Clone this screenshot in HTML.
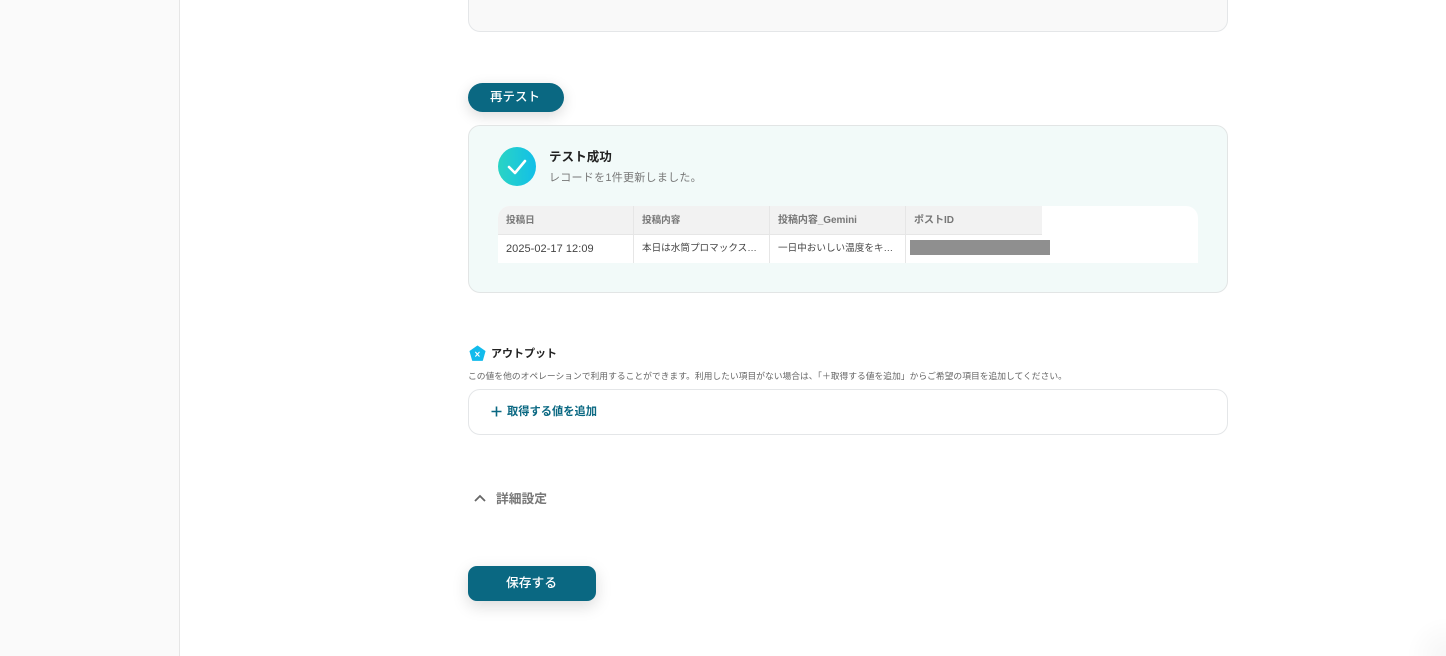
<!DOCTYPE html>
<html lang="ja"><head><meta charset="utf-8"><style>
*{box-sizing:border-box}
html,body{margin:0;padding:0;width:1446px;height:656px;overflow:hidden;background:#fff;font-family:"Liberation Sans","Noto Sans CJK JP",sans-serif;color:#222}
.a{position:absolute}
.t{position:absolute;white-space:nowrap;line-height:1}
.cell{position:absolute;top:0;height:57px;border-right:1px solid #e6e6e6}
</style></head><body>
<div class="a" style="left:0;top:0;width:180px;height:656px;background:#fafafa;border-right:1px solid #e6e6e6"></div>
<div class="a" style="left:468px;top:-40px;width:760px;height:72px;background:#f9f9f9;border:1px solid #e4e6e8;border-radius:12px"></div>

<div class="a" style="left:468px;top:83px;width:96px;height:29px;background:#0a6882;border-radius:15px;box-shadow:0 4px 14px rgba(0,0,0,.15)"></div>
<div class="t" style="left:490px;top:91px;font-size:12.5px;font-weight:500;color:#fff">再テスト</div>

<div class="a" style="left:468px;top:125px;width:760px;height:168px;background:#f2faf9;border:1px solid #e2e5e5;border-radius:12px"></div>
<div class="a" style="left:498px;top:147px;width:38px;height:39px;border-radius:50%;background:linear-gradient(90deg,#2ad4c4,#12bfe8)"></div>
<svg class="a" style="left:498px;top:147px" width="38" height="39" viewBox="0 0 38 39"><path d="M11 20l6 6 10-12" fill="none" stroke="#fff" stroke-width="2.6" stroke-linecap="round" stroke-linejoin="round"/></svg>
<div class="t" style="left:549px;top:151px;font-size:12.5px;font-weight:700;color:#222;letter-spacing:.1px">テスト成功</div>
<div class="t" style="left:549px;top:173px;font-size:11px;color:#777;letter-spacing:.27px">レコードを1件更新しました。</div>

<div class="a" style="left:498px;top:206px;width:700px;height:57px;background:#fff;border-radius:12px 12px 0 0;overflow:hidden">
  <div class="a" style="left:0;top:0;width:544px;height:28px;background:#f2f2f2"></div>
  <div class="a" style="left:0;top:28px;width:544px;height:1px;background:#e6e6e6"></div>
  <div class="cell" style="left:0;width:136px"></div>
  <div class="cell" style="left:136px;width:136px"></div>
  <div class="cell" style="left:272px;width:136px"></div>
  <div class="t" style="left:8px;top:10px;font-size:9.6px;font-weight:700;color:#777">投稿日</div>
  <div class="t" style="left:144px;top:10px;font-size:9.6px;font-weight:700;color:#777">投稿内容</div>
  <div class="t" style="left:280px;top:10px;font-size:10px;font-weight:700;color:#777;letter-spacing:-.05px">投稿内容_Gemini</div>
  <div class="t" style="left:416px;top:10px;font-size:10px;font-weight:700;color:#777">ポストID</div>
  <div class="t" style="left:8px;top:38px;font-size:11px;color:#444;letter-spacing:.05px">2025-02-17 12:09</div>
  <div class="t" style="left:144px;top:38px;font-size:9.6px;color:#444">本日は水筒プロマックス…</div>
  <div class="t" style="left:280px;top:38px;font-size:9.6px;color:#444">一日中おいしい温度をキ…</div>
</div>
<div class="a" style="left:910px;top:240px;width:140px;height:15px;background:#8f8f8f"></div>

<svg class="a" style="left:469px;top:345px" width="17" height="17" viewBox="0 0 17 17"><path d="M8.5 1L16 6.3 13.4 15.4H3.6L1 6.3Z" fill="#12bbec" stroke="#12bbec" stroke-width="1" stroke-linejoin="round"/><path d="M6.6 7.2l3.6 4M10.2 7.2l-3.6 4" stroke="#fff" stroke-width="1.1" stroke-linecap="round"/></svg>
<div class="t" style="left:491px;top:349px;font-size:11px;font-weight:700;color:#222">アウトプット</div>
<div class="t" style="left:468px;top:372px;font-size:8.78px;color:#666">この値を他のオペレーションで利用することができます。利用したい項目がない場合は、「＋取得する値を追加」からご希望の項目を追加してください。</div>

<div class="a" style="left:468px;top:389px;width:760px;height:46px;background:#fff;border:1px solid #e4e6e8;border-radius:12px"></div>
<svg class="a" style="left:490px;top:405px" width="13" height="13" viewBox="0 0 13 13"><path d="M6.5 1.5v10M1.5 6.5h10" stroke="#0a6882" stroke-width="1.6"/></svg>
<div class="t" style="left:507px;top:407px;font-size:11.25px;font-weight:700;color:#0a6882">取得する値を追加</div>

<svg class="a" style="left:473px;top:492px" width="14" height="12" viewBox="0 0 14 12"><path d="M2 9l5-5 5 5" fill="none" stroke="#666" stroke-width="1.8"/></svg>
<div class="t" style="left:496px;top:493px;font-size:12.75px;font-weight:700;color:#777">詳細設定</div>

<div class="a" style="left:468px;top:566px;width:128px;height:35px;background:#0a6882;border-radius:9px;box-shadow:0 5px 16px rgba(0,0,0,.15)"></div>
<div class="t" style="left:506px;top:577px;font-size:12.75px;font-weight:500;color:#fff">保存する</div>

<div class="a" style="left:1406px;top:616px;width:40px;height:40px;background:radial-gradient(circle at 100% 100%,rgba(0,0,0,.035),rgba(0,0,0,0) 70%)"></div>
</body></html>
